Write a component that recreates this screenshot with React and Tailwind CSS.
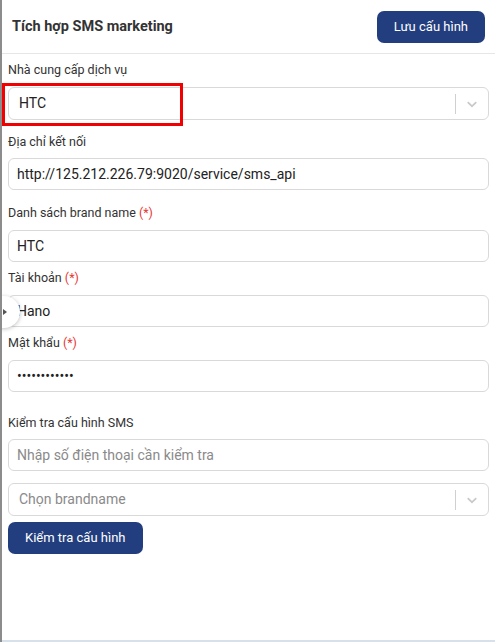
import React from "react";

const Chevron = () => (
  <svg width="16" height="16" viewBox="0 0 20 20" fill="#c9c9c9">
    <path d="M4.516 7.548c.436-.446 1.043-.481 1.576 0L10 11.295l3.908-3.747c.533-.481 1.141-.446 1.574 0 .436.445.408 1.197 0 1.615-.406.418-4.695 4.502-4.695 4.502a1.095 1.095 0 0 1-1.576 0S4.924 9.581 4.516 9.163c-.409-.418-.436-1.17 0-1.615z" />
  </svg>
);

const Req = () => <span className="text-[#e53935]"> (*)</span>;

const Field = ({ value, type = "text", placeholder }) => (
  <input
    type={type}
    defaultValue={value}
    placeholder={placeholder}
    className="w-full h-[32px] rounded-[6px] border border-[#d9d9d9] px-[8px] text-[14px] text-[#222] placeholder:text-[#8a8a8a] outline-none"
  />
);

const SelectBox = ({ value, placeholder }) => (
  <div className="flex items-center w-full h-[33px] rounded-[6px] border border-[#d9d9d9] bg-white">
    <div className={"flex-1 pl-[10px] text-[14px] " + (value ? "text-[#222]" : "text-[#8a8a8a]")}>
      {value || placeholder}
    </div>
    <span className="w-px h-[20px] bg-[#d0d0d0]" />
    <span className="w-[32px] flex justify-center">
      <Chevron />
    </span>
  </div>
);

export default function App() {
  return (
    <div
      className="relative w-[495px] h-[642px] bg-white overflow-hidden border-l-2 border-[#8c8c8c]"
      style={{ fontFamily: "Roboto, 'Noto Sans', sans-serif" }}
    >
      <div className="flex items-center justify-between h-[54px] border-b border-[#e6e6e6] pl-[10px] pr-[10px]">
        <h1 className="text-[14.5px] font-bold text-[#333]">Tích hợp SMS marketing</h1>
        <button className="h-[32px] px-[17px] rounded-[7px] bg-[#233e7e] text-white text-[13px]">
          Lưu cấu hình
        </button>
      </div>

      <div className="pl-[6px] pr-[6px] text-[12.5px] text-[#333]">
        <div className="pt-[6px]">
          <label className="block h-[20px] leading-[20px] mb-[7px]">Nhà cung cấp dịch vụ</label>
          <div className="relative">
            <SelectBox value="HTC" />
            <div className="absolute left-[-6px] top-[-4px] w-[181px] h-[43px] border-[3px] border-[#f00000]" />
          </div>
        </div>

        <div className="mt-[12px]">
          <label className="block h-[20px] leading-[20px] mb-[6px]">Địa chỉ kết nối</label>
          <Field value="http://125.212.226.79:9020/service/sms_api" />
        </div>

        <div className="mt-[13px]">
          <label className="block h-[20px] leading-[20px] mb-[7px]">
            Danh sách brand name<Req />
          </label>
          <Field value="HTC" />
        </div>

        <div className="mt-[6px]">
          <label className="block h-[20px] leading-[20px] mb-[7px]">
            Tài khoản<Req />
          </label>
          <Field value="Hano" />
        </div>

        <div className="mt-[6px]">
          <label className="block h-[20px] leading-[20px] mb-[7px]">
            Mật khẩu<Req />
          </label>
          <Field type="password" value="123456789012" />
        </div>

        <div className="mt-[21px]">
          <label className="block h-[20px] leading-[20px] mb-[6px]">Kiểm tra cấu hình SMS</label>
          <Field placeholder="Nhập số điện thoại cần kiểm tra" />
        </div>

        <div className="mt-[12px]">
          <SelectBox placeholder="Chọn brandname" />
        </div>

        <button className="mt-[6px] h-[32px] px-[17px] rounded-[7px] bg-[#233e7e] text-white text-[13px]">
          Kiểm tra cấu hình
        </button>
      </div>

      <div className="absolute left-[-14px] top-[296px] w-[32px] h-[32px] rounded-full bg-white shadow-[0_1px_4px_rgba(0,0,0,0.25)] flex items-center justify-end pr-[13px]">
        <span className="block w-0 h-0 border-y-[3px] border-y-transparent border-l-[4px] border-l-[#555]" />
      </div>

      <div className="absolute left-0 right-0 bottom-0 h-[2px] bg-[#d6e1ec]" />
    </div>
  );
}
